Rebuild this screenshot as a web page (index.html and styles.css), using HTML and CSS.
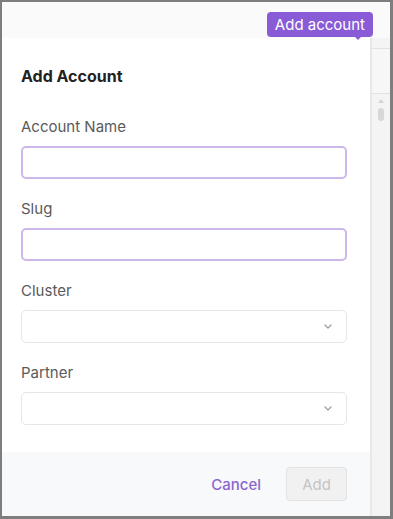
FILE: index.html
```html
<!DOCTYPE html>
<html lang="en">

<head>
    <meta charset="UTF-8">
    <meta name="viewport" content="width=device-width, initial-scale=1.0">
    <title>Add Account</title>

    <link rel="stylesheet" href="styles.css">

</head>

<body>
    <div class="frame">
        <div class="topbar">
            <button class="addBtn">Add account</button>
        </div>
        <div class="main">
            <div class="panel">
                <div class="panelBody">
                    <h2 class="title">Add Account</h2>
                    <div class="field">
                        <label class="label">Account Name</label>
                        <input class="input" type="text">
                    </div>
                    <div class="field">
                        <label class="label">Slug</label>
                        <input class="input" type="text">
                    </div>
                    <div class="field">
                        <label class="label">Cluster</label>
                        <div class="select">
                            <svg class="chevron" width="8" height="5" viewBox="0 0 8 5"><path d="M1 1l3 3 3-3" fill="none" stroke="#a0a0a0" stroke-width="1.3" stroke-linecap="round" stroke-linejoin="round"/></svg>
                        </div>
                    </div>
                    <div class="field">
                        <label class="label">Partner</label>
                        <div class="select">
                            <svg class="chevron" width="8" height="5" viewBox="0 0 8 5"><path d="M1 1l3 3 3-3" fill="none" stroke="#a0a0a0" stroke-width="1.3" stroke-linecap="round" stroke-linejoin="round"/></svg>
                        </div>
                    </div>
                </div>
                <div class="footer">
                    <button class="cancelBtn">Cancel</button>
                    <button class="submitBtn" disabled>Add</button>
                </div>
            </div>
            <div class="side">
                <div class="sideHead"></div>
                <div class="sideTrack">
                    <span class="arrow"></span>
                    <span class="thumb"></span>
                </div>
            </div>
        </div>
    </div>
</body>

</html>
```

FILE: styles.css
```css
* {
    box-sizing: border-box;
}

body {
    margin: 0;
    font-family: Inter, "Liberation Sans", sans-serif;
}

.frame {
    width: 393px;
    height: 519px;
    border: solid #7e7e7e;
    border-width: 2px 3px 3px 2px;
    display: flex;
    flex-direction: column;
    background: #f7f7f7;
    overflow: hidden;
}

.topbar {
    height: 36px;
    display: flex;
    justify-content: flex-end;
    align-items: flex-start;
    padding: 10px 17px 0 0;
    background: #fafafa;
}

.addBtn {
    position: relative;
    height: 25px;
    padding: 0 8px;
    border: none;
    border-radius: 4px;
    background: #8a5bd6;
    color: #fff;
    font-family: inherit;
    font-size: 15px;
    z-index: 2;
}

.addBtn::after {
    content: "";
    position: absolute;
    right: 11px;
    bottom: -3px;
    border-left: 4px solid transparent;
    border-right: 4px solid transparent;
    border-top: 4px solid #8a5bd6;
}

.main {
    flex: 1;
    display: flex;
}

.panel {
    width: 368px;
    display: flex;
    flex-direction: column;
    background: #fff;
}

.panelBody {
    flex: 1;
    padding: 28px 23px 0 19px;
}

.title {
    margin: 0 0 31px;
    font-size: 16px;
    line-height: 20px;
    font-weight: 700;
    color: #222;
}

.field {
    margin-bottom: 20px;
}

.label {
    display: block;
    margin-bottom: 9px;
    font-size: 15px;
    line-height: 20px;
    color: #5a5a5a;
}

.input {
    display: block;
    width: 100%;
    height: 33px;
    border: 2px solid #cdb8ec;
    border-radius: 5px;
    background: #fff;
}

.select {
    height: 33px;
    border: 1px solid #e6e6e6;
    border-radius: 5px;
    display: flex;
    align-items: center;
    justify-content: flex-end;
    padding-right: 14px;
}

.footer {
    height: 64px;
    display: flex;
    align-items: center;
    justify-content: flex-end;
    gap: 25px;
    padding-right: 23px;
    background: #f8f9fb;
}

.cancelBtn {
    border: none;
    background: none;
    padding: 0;
    font-family: inherit;
    font-size: 15px;
    font-weight: 500;
    color: #8b66cf;
}

.submitBtn {
    width: 61px;
    height: 34px;
    border: 1px solid #e3e3e3;
    border-radius: 4px;
    background: #f1f1f1;
    font-family: inherit;
    font-size: 15px;
    color: #c4c4c4;
}

.side {
    flex: 1;
    border-left: 2px solid #e8e8e8;
    background: #f4f4f4;
    display: flex;
    flex-direction: column;
}

.sideHead {
    height: 46px;
    border-top: 1px solid #e2e2e2;
    margin-top: 10px;
    border-bottom: 1px solid #e2e2e2;
    background: #f7f7f7;
}

.sideTrack {
    flex: 1;
    display: flex;
    flex-direction: column;
    align-items: center;
    padding-top: 5px;
    gap: 5px;
}

.arrow {
    width: 0;
    height: 0;
    border-left: 3px solid transparent;
    border-right: 3px solid transparent;
    border-bottom: 4px solid #d6d6d6;
}

.thumb {
    width: 6px;
    height: 13px;
    border-radius: 3px;
    background: #d8d8d8;
}
```
